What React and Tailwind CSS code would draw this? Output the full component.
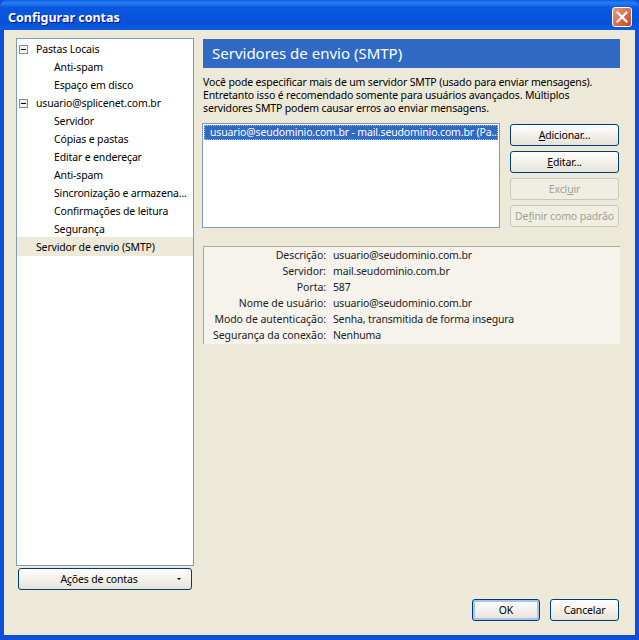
import React from "react";

const tree = [
  { label: "Pastas Locais", toggle: true },
  { label: "Anti-spam", child: true },
  { label: "Espaço em disco", child: true },
  { label: "usuario@splicenet.com.br", toggle: true },
  { label: "Servidor", child: true },
  { label: "Cópias e pastas", child: true },
  { label: "Editar e endereçar", child: true },
  { label: "Anti-spam", child: true },
  { label: "Sincronização e armazena...", child: true },
  { label: "Confirmações de leitura", child: true },
  { label: "Segurança", child: true },
  { label: "Servidor de envio (SMTP)", selected: true },
];

const details = [
  ["Descrição:", "usuario@seudominio.com.br"],
  ["Servidor:", "mail.seudominio.com.br"],
  ["Porta:", "587"],
  ["Nome de usuário:", "usuario@seudominio.com.br"],
  ["Modo de autenticação:", "Senha, transmitida de forma insegura"],
  ["Segurança da conexão:", "Nenhuma"],
];

function XpButton({ children, disabled, isDefault, className = "" }) {
  const look = disabled
    ? "border-[#c9c7ba] text-[#a1a192] bg-[#f0eee2]"
    : isDefault
    ? "pt-px border-[#003c74] text-black bg-gradient-to-b from-white to-[#e6e3d8] shadow-[inset_0_0_0_2px_#a9c4ea]"
    : "pt-px border-[#003c74] text-black bg-gradient-to-b from-white to-[#e6e3d8]";
  return (
    <button className={`flex items-center justify-center border rounded-[3px] h-[22px] ${look} ${className}`}>
      {children}
    </button>
  );
}

function Toggle() {
  return (
    <span className="flex items-center justify-center w-[9px] h-[9px] border border-[#7f8a9c] bg-[#f4f3ee]">
      <span className="w-[5px] h-px bg-black" />
    </span>
  );
}

export default function App() {
  return (
    <div className="w-[639px] h-[640px] flex flex-col bg-[#0f4fd8] overflow-hidden text-[10.5px] tracking-[-0.15px] leading-[13px] text-black [font-family:'Noto_Sans',sans-serif]">
      {/* Title bar */}
      <div className="h-[30px] shrink-0 flex items-center justify-between pt-[4px] pl-[8px] pr-[7px] rounded-t-[7px] bg-[linear-gradient(to_bottom,#0a5fe8_0%,#2a7df2_10%,#0a58e0_25%,#0552d8_80%,#0a5fe4_100%)]">
        <span className="text-white font-bold text-[12.5px] tracking-normal [text-shadow:1px_1px_#0f1089]">
          Configurar contas
        </span>
        <span className="w-[20px] h-[20px] rounded-[3px] border border-white bg-gradient-to-br from-[#e89a80] to-[#c8401c] flex items-center justify-center">
          <svg width="12" height="12" viewBox="0 0 12 12">
            <path d="M1.5 1.5l9 9M10.5 1.5l-9 9" stroke="#fff" strokeWidth="2.2" strokeLinecap="square" />
          </svg>
        </span>
      </div>

      {/* Window body */}
      <div className="flex-1 mx-[4px] mb-[5px] bg-[#ece9d8] flex flex-col pl-[12px] pr-[15px] pt-[8px]">
        <div className="flex gap-[9px]">
          {/* Left column */}
          <div className="w-[178px] shrink-0 flex flex-col">
            <div className="h-[528px] border border-[#7f9db9] bg-white pt-px">
              {tree.map((item, i) => (
                <div
                  key={i}
                  className={`flex items-center whitespace-nowrap ${item.selected ? "h-[19px] -mt-px pt-px bg-[#ece9d8]" : "h-[18px]"} ${item.child ? "pl-[37px]" : "pl-[19px]"}`}
                >
                  {item.toggle && (
                    <span className="-ml-[17px] mr-[8px]">
                      <Toggle />
                    </span>
                  )}
                  {item.label}
                </div>
              ))}
            </div>
            <XpButton className="mt-[2px] mx-[2px] pr-[12px] relative">
              <span>
                A<u>ç</u>ões de contas
              </span>
              <span className="absolute right-[10px] top-[9px] w-0 h-0 border-x-[2px] border-x-transparent border-t-[2px] border-t-black" />
            </XpButton>
          </div>

          {/* Right column */}
          <div className="flex-1 min-w-0 flex flex-col pt-px">
            <div className="h-[29px] shrink-0 bg-[#316ac5] text-white text-[15px] tracking-normal flex items-center pl-[9px]">
              Servidores de envio (SMTP)
            </div>
            <p className="mt-[8px] whitespace-nowrap">
              Você pode especificar mais de um servidor SMTP (usado para enviar mensagens).
              <br />
              Entretanto isso é recomendado somente para usuários avançados. Múltiplos
              <br />
              servidores SMTP podem causar erros ao enviar mensagens.
            </p>
            <div className="mt-[8px] flex gap-[10px] -ml-px">
              <div className="w-[298px] h-[105px] border border-[#7f9db9] bg-white p-px">
                <div className="h-[15px] bg-[#316ac5] text-white pl-[6px] flex items-center whitespace-nowrap outline-1 outline-dotted outline-[#aac4ee] -outline-offset-1">
                  usuario@seudominio.com.br - mail.seudominio.com.br (Pa...
                </div>
              </div>
              <div className="w-[109px] flex flex-col gap-[5px] pt-px">
                <XpButton>
                  <span>
                    <u>A</u>dicionar...
                  </span>
                </XpButton>
                <XpButton>
                  <span>
                    <u>E</u>ditar...
                  </span>
                </XpButton>
                <XpButton disabled>
                  <span>
                    Excl<u>u</u>ir
                  </span>
                </XpButton>
                <XpButton disabled>
                  <span>
                    De<u>f</u>inir como padrão
                  </span>
                </XpButton>
              </div>
            </div>
            <div className="mt-[18px] h-[98px] border-t border-l border-[#aca899] bg-[#f5f3ec] overflow-hidden">
              {details.map(([label, value]) => (
                <div key={label} className="h-[16px] flex items-center whitespace-nowrap">
                  <span className="w-[122px] text-right text-[#222] tracking-[-0.05px]">{label}</span>
                  <span className="ml-[7px] text-[#222]">{value}</span>
                </div>
              ))}
            </div>
          </div>
        </div>

        {/* Dialog buttons */}
        <div className="flex justify-end gap-[10px] mt-[9px] mr-px">
          <XpButton isDefault className="w-[68px]">OK</XpButton>
          <XpButton className="w-[69px]">Cancelar</XpButton>
        </div>
      </div>
    </div>
  );
}
